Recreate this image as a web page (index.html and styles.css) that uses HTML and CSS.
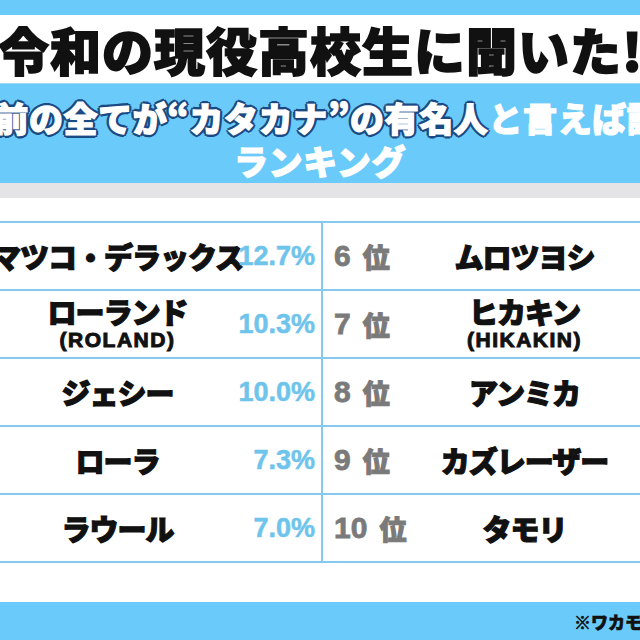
FILE: index.html
```html
<!DOCTYPE html>
<html lang="ja">
<head>
<meta charset="utf-8">
<link rel="stylesheet" href="styles.css">
</head>
<body>
<div class="page">
  <div class="top-band"></div>
  <div class="title"><span>令和の現役高校生に聞いた!</span></div>
  <div class="sub-band">
    <div class="sub-line"><span class="outlined">名前の全てが“カタカナ”の有名人</span><span class="plain">と言えば誰?</span></div>
    <div class="sub-line"><span class="plain">ランキング</span></div>
  </div>
  <div class="gray-strip"></div>
  <div class="table-area">
    <div class="table">
      <div class="cell left"><div class="name">マツコ・デラックス</div><div class="pct">12.7%</div></div>
      <div class="cell right"><div class="rank"><span class="num">6</span><span class="i">位</span></div><div class="name">ムロツヨシ</div></div>

      <div class="cell left"><div class="name"><span>ローランド</span><span class="en">(ROLAND)</span></div><div class="pct">10.3%</div></div>
      <div class="cell right"><div class="rank"><span class="num">7</span><span class="i">位</span></div><div class="name"><span>ヒカキン</span><span class="en">(HIKAKIN)</span></div></div>

      <div class="cell left"><div class="name">ジェシー</div><div class="pct">10.0%</div></div>
      <div class="cell right"><div class="rank"><span class="num">8</span><span class="i">位</span></div><div class="name">アンミカ</div></div>

      <div class="cell left"><div class="name">ローラ</div><div class="pct">7.3%</div></div>
      <div class="cell right"><div class="rank"><span class="num">9</span><span class="i">位</span></div><div class="name">カズレーザー</div></div>

      <div class="cell left last"><div class="name">ラウール</div><div class="pct">7.0%</div></div>
      <div class="cell right last"><div class="rank"><span class="num">10</span><span class="i">位</span></div><div class="name">タモリ</div></div>
    </div>
  </div>
  <div class="bottom-band"><span class="note">※ワカモノリサーチ調べ</span></div>
</div>
</body>
</html>
```

FILE: styles.css
```css
* { box-sizing: border-box; }
html, body { margin: 0; padding: 0; }
body {
  width: 640px;
  height: 640px;
  overflow: hidden;
  background: #ffffff;
  font-family: "Noto Sans CJK JP", "Noto Sans", sans-serif;
}
.page {
  width: 640px;
  height: 640px;
  display: flex;
  flex-direction: column;
  overflow: hidden;
}
.top-band {
  height: 15px;
  background: #6acbfb;
  flex: none;
}
.title {
  height: 68px;
  flex: none;
  background: #ffffff;
  display: flex;
  align-items: center;
  white-space: nowrap;
  overflow: hidden;
  font-size: 51px;
  font-weight: 900;
  line-height: 68px;
  letter-spacing: 1px;
  color: #111111;
  -webkit-text-stroke: 1.6px #111111;
}
.title span {
  margin-left: -2px;
}
.sub-band {
  height: 100px;
  flex: none;
  background: #6acbfb;
  padding-top: 12px;
  overflow: hidden;
  border-top: 1px solid #9fd9f7;
}
.sub-line {
  display: flex;
  justify-content: center;
  white-space: nowrap;
  height: 43px;
  line-height: 43px;
  font-size: 34px;
  font-weight: 900;
  letter-spacing: 0.6px;
  color: #ffffff;
  -webkit-text-stroke: 1.2px #ffffff;
}
.outlined {
  text-shadow:
    2px 0 0 #1b4a82, -2px 0 0 #1b4a82, 0 2px 0 #1b4a82, 0 -2px 0 #1b4a82,
    2px 2px 0 #1b4a82, -2px -2px 0 #1b4a82, 2px -2px 0 #1b4a82, -2px 2px 0 #1b4a82,
    3px 0 0 #1b4a82, -3px 0 0 #1b4a82, 0 3px 0 #1b4a82, 0 -3px 0 #1b4a82;
}
.gray-strip {
  height: 15px;
  flex: none;
  background: #e4e4e6;
}
.table-area {
  flex: 1;
  padding-top: 23px;
  background: #ffffff;
}
.table {
  display: grid;
  grid-template-columns: 323px 317px;
  grid-auto-rows: 68px;
}
.cell {
  border-top: 2px solid #86c9ee;
  display: grid;
  align-items: center;
}
.cell.last {
  border-bottom: 2px solid #86c9ee;
  height: 70px;
}
.left {
  grid-template-columns: 235px 1fr;
  border-right: 2px solid #86c9ee;
  padding-right: 6px;
}
.right {
  grid-template-columns: 90px 1fr;
}
.name {
  display: flex;
  flex-direction: column;
  align-items: center;
  justify-content: center;
  white-space: nowrap;
  font-size: 29px;
  font-weight: 900;
  line-height: 30px;
  color: #111111;
  letter-spacing: -1px;
  -webkit-text-stroke: 1.2px #111111;
}
.right .name {
  padding-right: 4px;
}
.en {
  font-family: "Liberation Sans", Arial, sans-serif;
  font-size: 21px;
  font-weight: 700;
  line-height: 24px;
  letter-spacing: 1.5px;
  margin-top: 2px;
  -webkit-text-stroke: 1px #111111;
}
.pct {
  text-align: right;
  font-family: "Liberation Sans", Arial, sans-serif;
  font-weight: 700;
  font-size: 27px;
  color: #6ec4ea;
  -webkit-text-stroke: 0.5px #6ec4ea;
}
.rank {
  display: flex;
  align-items: center;
  padding-left: 11px;
  color: #7a7a7a;
  white-space: nowrap;
}
.rank .num {
  font-family: "Liberation Sans", Arial, sans-serif;
  font-weight: 700;
  font-size: 30px;
  -webkit-text-stroke: 0.8px #7a7a7a;
}
.rank .i {
  font-size: 27px;
  font-weight: 900;
  margin-left: 12px;
  -webkit-text-stroke: 1px #7a7a7a;
}
.bottom-band {
  height: 38px;
  flex: none;
  background: #6acbfb;
  display: flex;
  align-items: center;
  padding-left: 574px;
  white-space: nowrap;
  overflow: hidden;
}
.note {
  font-size: 17px;
  font-weight: 900;
  color: #111111;
  -webkit-text-stroke: 0.6px #111111;
}
```
